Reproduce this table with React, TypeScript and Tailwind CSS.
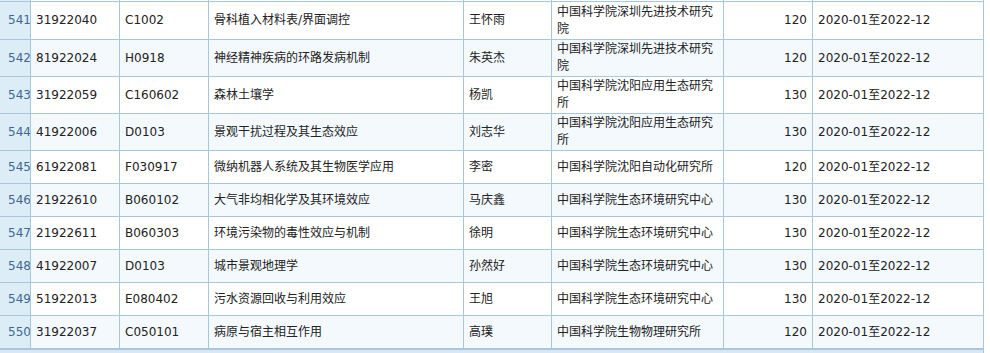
import React from "react";

type Row = {
  no: string;
  code: string;
  sub: string;
  title: string;
  name: string;
  org: string;
  amt: string;
  date: string;
};

const rows: Row[] = [
  { no: "541", code: "31922040", sub: "C1002", title: "骨科植入材料表/界面调控", name: "王怀雨", org: "中国科学院深圳先进技术研究院", amt: "120", date: "2020-01至2022-12" },
  { no: "542", code: "81922024", sub: "H0918", title: "神经精神疾病的环路发病机制", name: "朱英杰", org: "中国科学院深圳先进技术研究院", amt: "120", date: "2020-01至2022-12" },
  { no: "543", code: "31922059", sub: "C160602", title: "森林土壤学", name: "杨凯", org: "中国科学院沈阳应用生态研究所", amt: "130", date: "2020-01至2022-12" },
  { no: "544", code: "41922006", sub: "D0103", title: "景观干扰过程及其生态效应", name: "刘志华", org: "中国科学院沈阳应用生态研究所", amt: "130", date: "2020-01至2022-12" },
  { no: "545", code: "61922081", sub: "F030917", title: "微纳机器人系统及其生物医学应用", name: "李密", org: "中国科学院沈阳自动化研究所", amt: "120", date: "2020-01至2022-12" },
  { no: "546", code: "21922610", sub: "B060102", title: "大气非均相化学及其环境效应", name: "马庆鑫", org: "中国科学院生态环境研究中心", amt: "130", date: "2020-01至2022-12" },
  { no: "547", code: "21922611", sub: "B060303", title: "环境污染物的毒性效应与机制", name: "徐明", org: "中国科学院生态环境研究中心", amt: "130", date: "2020-01至2022-12" },
  { no: "548", code: "41922007", sub: "D0103", title: "城市景观地理学", name: "孙然好", org: "中国科学院生态环境研究中心", amt: "130", date: "2020-01至2022-12" },
  { no: "549", code: "51922013", sub: "E080402", title: "污水资源回收与利用效应", name: "王旭", org: "中国科学院生态环境研究中心", amt: "130", date: "2020-01至2022-12" },
  { no: "550", code: "31922037", sub: "C050101", title: "病原与宿主相互作用", name: "高璞", org: "中国科学院生物物理研究所", amt: "120", date: "2020-01至2022-12" },
];

const grid =
  "grid grid-cols-[31px_89px_89px_255px_88px_172px_89px_171px]";
const cell =
  "box-border border-r border-b border-[#a9c6df] flex items-center px-[5px] py-px leading-[17px] min-h-[33px]";

export default function App() {
  return (
    <div
      className="w-[990px] h-[353px] overflow-hidden bg-white text-[12px] text-[#222222]"
      style={{ fontFamily: '"DejaVu Sans", "Noto Sans CJK SC", sans-serif' }}
    >
      <div className="w-[984px]">
        {/* tail of previous row */}
        <div className={grid}>
          <div className="h-[2px] box-border border-r border-b border-[#a9c6df] bg-[#dcedf8]" />
          {Array.from({ length: 7 }).map((_, i) => (
            <div key={i} className="h-[2px] box-border border-r border-b border-[#a9c6df] bg-white" />
          ))}
        </div>
        {rows.map((r, i) => {
          const bg = i % 2 === 1 ? "bg-[#f4f9fe]" : "bg-white";
          const first = i === 0 ? " min-h-[38px]" : "";
          return (
            <div key={r.no} className={grid}>
              <div className={`${cell}${first} bg-[#dcedf8] pl-[8px] pr-0 overflow-hidden whitespace-nowrap text-[#40688f]`}>
                {r.no}
              </div>
              <div className={`${cell}${first} ${bg}`}>{r.code}</div>
              <div className={`${cell}${first} ${bg}`}>{r.sub}</div>
              <div className={`${cell}${first} ${bg}`}>{r.title}</div>
              <div className={`${cell}${first} ${bg}`}>{r.name}</div>
              <div className={`${cell}${first} ${bg}`}>{r.org}</div>
              <div className={`${cell}${first} ${bg} justify-end`}>{r.amt}</div>
              <div className={`${cell}${first} ${bg} whitespace-nowrap`}>{r.date}</div>
            </div>
          );
        })}
        <div className="h-[10px] box-border border-t border-r border-[#a9c6df] bg-[#d9e8f4]" />
      </div>
    </div>
  );
}
